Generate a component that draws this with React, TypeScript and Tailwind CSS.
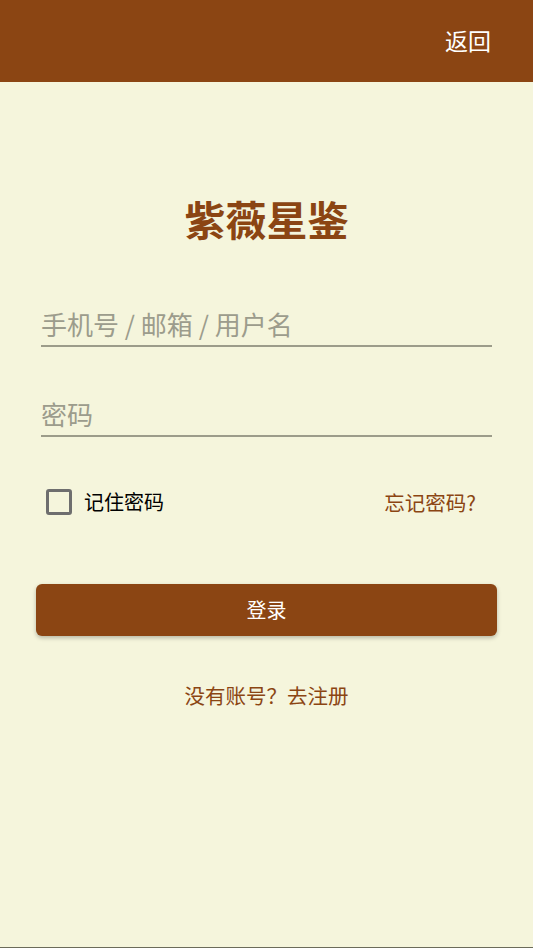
import { useState } from 'react'

const FONT = { fontFamily: '"Noto Sans CJK SC", "Noto Sans", sans-serif' }

/* ─── Underlined field ───────────────────────────────────────── */
function Field({ placeholder, type = 'text' }: { placeholder: string; type?: string }) {
  return (
    <input
      type={type}
      placeholder={placeholder}
      className="w-full bg-transparent border-0 border-b-2 border-[#9c9c8a] px-0 pb-[2px] text-[26px] leading-[38px] text-[#333] placeholder:text-[#9c9c8c] outline-none"
      style={FONT}
    />
  )
}

export default function App() {
  const [remember, setRemember] = useState(false)

  return (
    <div className="min-h-[948px] bg-[#f5f5dc] flex flex-col border-b border-[#6b6b5a]" style={FONT}>
      {/* Header */}
      <header className="h-[82px] bg-[#8b4513] flex items-center justify-end px-[42px]">
        <button className="text-[23px] text-white pb-[2px]">返回</button>
      </header>

      <main className="flex flex-col px-[36px] pt-[112px]">
        <h1 className="text-center text-[41px] font-bold leading-[48px] text-[#8b4513]">紫薇星鉴</h1>

        <div className="px-[5px] mt-[63px] flex flex-col gap-[48px]">
          <Field placeholder="手机号 / 邮箱 / 用户名" />
          <Field placeholder="密码" type="password" />
        </div>

        {/* Remember / forgot */}
        <div className="mt-[50px] flex items-center justify-between px-[10px] pr-[21px]">
          <label className="flex items-center gap-[12px] cursor-pointer">
            <span
              onClick={() => setRemember(r => !r)}
              className="w-[26px] h-[26px] rounded-[3px] border-[3px] border-[#6e6e6e] flex items-center justify-center"
            >
              {remember && <span className="w-[12px] h-[12px] bg-[#6e6e6e]" />}
            </span>
            <span className="text-[20px] text-black">记住密码</span>
          </label>
          <a className="text-[20.5px] text-[#8b4513]">忘记密码?</a>
        </div>

        <button className="mt-[66px] h-[52px] w-full rounded-[6px] bg-[#8b4513] text-white text-[20px] shadow-[0_2px_4px_rgba(0,0,0,0.25)]">
          登录
        </button>

        <p className="mt-[44px] text-center text-[20.5px] text-[#8b4513]">没有账号？去注册</p>
      </main>
    </div>
  )
}
